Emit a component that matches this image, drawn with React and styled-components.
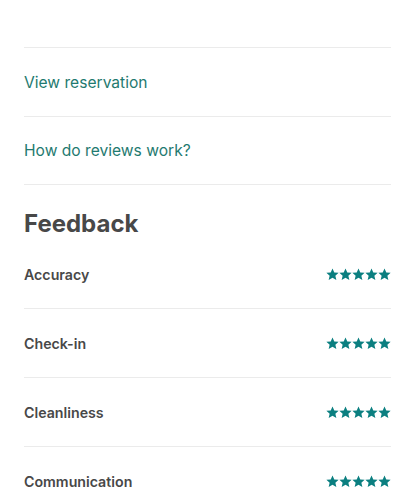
import React from 'react';
import styled, { createGlobalStyle } from 'styled-components';

const GlobalStyle = createGlobalStyle`
    body {
        margin: 0;
        background: #ffffff;
        font-family: Inter, "Liberation Sans", sans-serif;
        color: #484848;
    }
`;

const Page = styled.div`
    padding: 47px 24px 0 24px;
`;

const LinkRow = styled.div`
    height: ${props => props.h}px;
    border-top: 1px solid #ebebeb;
    display: flex;
    align-items: center;
    a {
        color: #1f7a70;
        font-size: 15.6px;
        text-decoration: none;
    }
`;

const FeedbackSection = styled.section`
    border-top: 1px solid #ebebeb;
    padding-top: 25px;
`;

const Title = styled.h2`
    margin: 0 0 2px 0;
    font-size: 24px;
    line-height: 28px;
    font-weight: 700;
    color: #484848;
`;

const RatingRow = styled.div`
    height: 68px;
    display: flex;
    align-items: center;
    justify-content: space-between;
    border-bottom: ${props => props.last ? 'none' : '1px solid #ebebeb'};
`;

const Label = styled.span`
    font-size: 14.2px;
    font-weight: 600;
    color: #484848;
`;

const Stars = styled.div`
    display: flex;
    margin-right: 0;
    svg {
        width: 13px;
        height: 13px;
        display: block;
    }
`;

function Star() {
    return (
        <svg viewBox="0 0 24 24">
            <path fill="#0b7f80" d="M12 0.8l3.3 7.3 8 .8-6 5.4 1.8 7.9L12 18.1l-7.1 4.1 1.8-7.9-6-5.4 8-.8z" />
        </svg>
    );
}

const ratings = ['Accuracy', 'Check-in', 'Cleanliness', 'Communication'];

export default function App() {
    return (
        <Page>
            <GlobalStyle />
            <LinkRow h={68}><a href="#">View reservation</a></LinkRow>
            <LinkRow h={67}><a href="#">How do reviews work?</a></LinkRow>
            <FeedbackSection>
                <Title>Feedback</Title>
                {ratings.map((r, i) => (
                    <RatingRow key={r} last={i === ratings.length - 1}>
                        <Label>{r}</Label>
                        <Stars>
                            {[0, 1, 2, 3, 4].map(s => <Star key={s} />)}
                        </Stars>
                    </RatingRow>
                ))}
            </FeedbackSection>
        </Page>
    );
}
